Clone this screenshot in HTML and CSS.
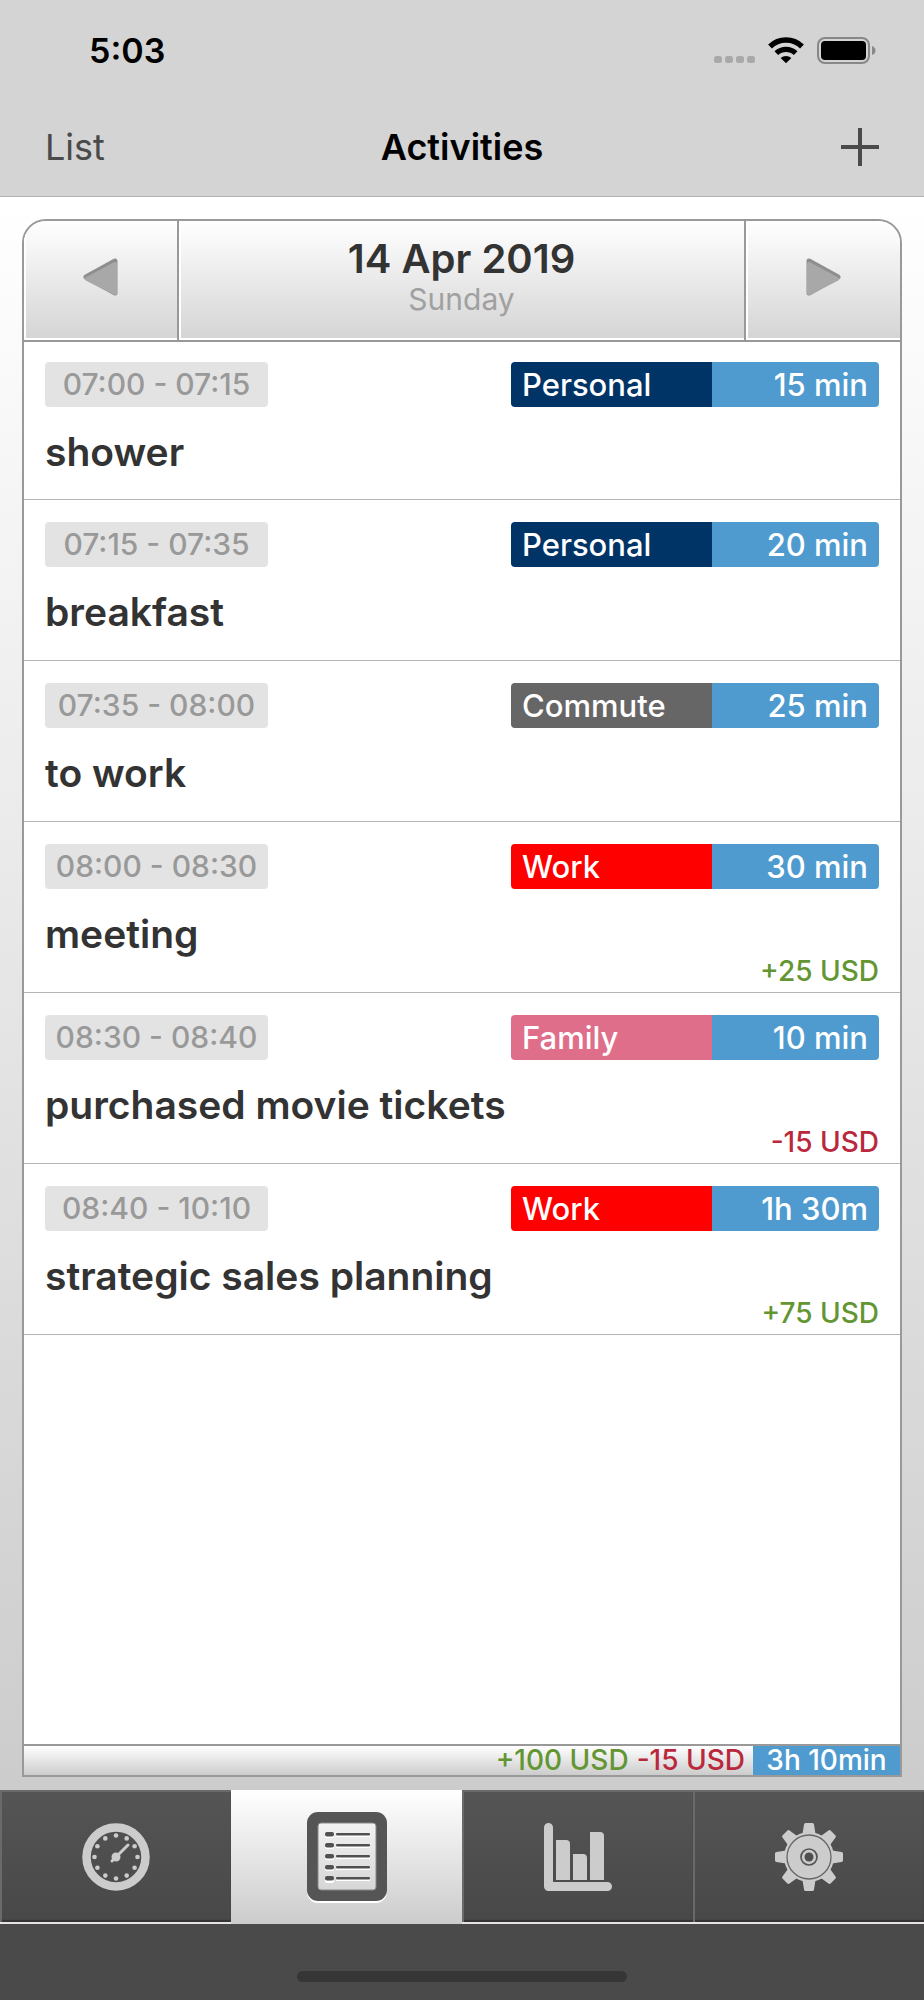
FILE: index.html
```html
<!DOCTYPE html>
<html lang="en">
<head>
    <meta charset="UTF-8">
    <meta name="viewport" content="width=device-width, initial-scale=1.0">
    <title>Activities</title>
    <link rel="stylesheet" href="styles.css">
</head>
<body>
    <header>
        <div class="status">
            <span class="clock">5:03</span>
            <div class="status-icons">
                <svg width="41" height="26" fill="#a9a9a9">
                    <rect x="0" y="19" width="8" height="7" rx="2.5"/>
                    <rect x="11" y="19" width="8" height="7" rx="2.5"/>
                    <rect x="22" y="19" width="8" height="7" rx="2.5"/>
                    <rect x="33" y="19" width="8" height="7" rx="2.5"/>
                </svg>
                <svg width="36" height="26" viewBox="0 0 36 26">
                    <path d="M2 9.5a23 23 0 0 1 32 0" fill="none" stroke="#000" stroke-width="5.4"/>
                    <path d="M8.3 16.2a14 14 0 0 1 19.4 0" fill="none" stroke="#000" stroke-width="5.2"/>
                    <path d="M12.6 21a8 8 0 0 1 10.8 0L18 26.2z"/>
                </svg>
                <svg width="59" height="27" viewBox="0 0 59 27">
                    <rect x="1" y="1" width="51" height="25" rx="7" fill="none" stroke="#888" stroke-width="2"/>
                    <rect x="4" y="4" width="45" height="19" rx="4"/>
                    <path d="M55 9q3.500 1.500 3.500 4.500t-3.500 4.500z" fill="#888"/>
                </svg>
            </div>
        </div>
        <div class="navbar">
            <button class="nav-btn">List</button>
            <h1>Activities</h1>
            <button class="nav-btn add" aria-label="Add">
                <svg width="38" height="38"><path d="M19 0v38M0 19h38" stroke="#4a4a4a" stroke-width="4"/></svg>
            </button>
        </div>
    </header>

    <main>
        <div class="panel">
            <div class="day-nav">
                <button class="day-btn" aria-label="Previous day">
                    <svg width="36" height="40" viewBox="0 0 36 40">
                        <path d="M3 20L32 4v32z" fill="#8e8e8e" stroke="#8e8e8e" stroke-width="5" stroke-linejoin="round"/>
                        <path d="M4 22L32 7v29z" fill="#a8a8a8" stroke="#a8a8a8" stroke-width="4" stroke-linejoin="round"/>
                    </svg>
                </button>
                <button class="day-btn">
                    <span class="date">14 Apr 2019</span>
                    <span class="weekday">Sunday</span>
                </button>
                <button class="day-btn" aria-label="Next day">
                    <svg width="36" height="40" viewBox="0 0 36 40">
                        <path d="M33 20L4 4v32z" fill="#8e8e8e" stroke="#8e8e8e" stroke-width="5" stroke-linejoin="round"/>
                        <path d="M32 22L4 7v29z" fill="#a8a8a8" stroke="#a8a8a8" stroke-width="4" stroke-linejoin="round"/>
                    </svg>
                </button>
            </div>

            <ul class="list">
                <li class="item">
                    <div class="item-top">
                        <span class="time">07:00 - 07:15</span>
                        <div class="tag"><span class="cat personal">Personal</span><span class="duration">15 min</span></div>
                    </div>
                    <div class="item-bottom"><h2>shower</h2></div>
                </li>
                <li class="item">
                    <div class="item-top">
                        <span class="time">07:15 - 07:35</span>
                        <div class="tag"><span class="cat personal">Personal</span><span class="duration">20 min</span></div>
                    </div>
                    <div class="item-bottom"><h2>breakfast</h2></div>
                </li>
                <li class="item">
                    <div class="item-top">
                        <span class="time">07:35 - 08:00</span>
                        <div class="tag"><span class="cat commute">Commute</span><span class="duration">25 min</span></div>
                    </div>
                    <div class="item-bottom"><h2>to work</h2></div>
                </li>
                <li class="item paid">
                    <div class="item-top">
                        <span class="time">08:00 - 08:30</span>
                        <div class="tag"><span class="cat work">Work</span><span class="duration">30 min</span></div>
                    </div>
                    <div class="item-bottom"><h2>meeting</h2><span class="amount plus">+25 USD</span></div>
                </li>
                <li class="item paid">
                    <div class="item-top">
                        <span class="time">08:30 - 08:40</span>
                        <div class="tag"><span class="cat family">Family</span><span class="duration">10 min</span></div>
                    </div>
                    <div class="item-bottom"><h2>purchased movie tickets</h2><span class="amount minus">-15 USD</span></div>
                </li>
                <li class="item paid">
                    <div class="item-top">
                        <span class="time">08:40 - 10:10</span>
                        <div class="tag"><span class="cat work">Work</span><span class="duration">1h 30m</span></div>
                    </div>
                    <div class="item-bottom"><h2>strategic sales planning</h2><span class="amount plus">+75 USD</span></div>
                </li>
            </ul>

            <div class="totals">
                <span class="amount plus">+100 USD</span>
                <span class="amount minus">-15 USD</span>
                <span class="total-time">3h 10min</span>
            </div>
        </div>
    </main>

    <nav class="tabs">
        <button class="tab" aria-label="Timer">
            <svg width="68" height="68" viewBox="0 0 68 68" fill="#ccc">
                <circle cx="34" cy="34" r="29.500" fill="none" stroke="#ccc" stroke-width="8.500"/>
                <circle cx="34" cy="12.500" r="2.300"/>
                <circle cx="44.700" cy="15.400" r="2.300"/>
                <circle cx="52.600" cy="23.300" r="2.300"/>
                <circle cx="55.500" cy="34" r="2.300"/>
                <circle cx="52.600" cy="44.700" r="2.300"/>
                <circle cx="44.700" cy="52.600" r="2.300"/>
                <circle cx="34" cy="55.500" r="2.300"/>
                <circle cx="23.300" cy="52.600" r="2.300"/>
                <circle cx="15.400" cy="44.700" r="2.300"/>
                <circle cx="12.500" cy="34" r="2.300"/>
                <circle cx="15.400" cy="23.300" r="2.300"/>
                <circle cx="23.300" cy="15.400" r="2.300"/>
                <circle cx="34" cy="34" r="4.500"/>
                <path d="M30 38L46 22" stroke="#ccc" stroke-width="3" stroke-linecap="round"/>
            </svg>
        </button>
        <button class="tab active" aria-label="Activities">
            <svg width="82" height="92" viewBox="0 0 82 92">
                <defs>
                    <linearGradient id="paper" x1="0" y1="0" x2="0" y2="1">
                        <stop offset="0" stop-color="#f2f2f2"/>
                        <stop offset="1" stop-color="#d6d6d6"/>
                    </linearGradient>
                </defs>
                <rect x="1" y="3" width="80" height="89" rx="11" fill="#fff"/>
                <rect x="1" y="1" width="80" height="89" rx="11" fill="#555"/>
                <rect x="12" y="12" width="58" height="67" rx="3" fill="url(#paper)" stroke="#888"/>
                <g fill="#fff">
                    <rect x="19" y="23" width="9" height="4" rx="2"/><rect x="30" y="23" width="34" height="3"/>
                    <rect x="19" y="34" width="9" height="4" rx="2"/><rect x="30" y="34" width="34" height="3"/>
                    <rect x="19" y="45" width="9" height="4" rx="2"/><rect x="30" y="45" width="34" height="3"/>
                    <rect x="19" y="56" width="9" height="4" rx="2"/><rect x="30" y="56" width="34" height="3"/>
                    <rect x="19" y="67" width="9" height="5" rx="2"/><rect x="30" y="67" width="34" height="3"/>
                </g>
                <g fill="#505050">
                    <rect x="19" y="21" width="9" height="4.500" rx="2"/><rect x="30" y="22" width="34" height="2.500" rx="1"/>
                    <rect x="19" y="32" width="9" height="4.500" rx="2"/><rect x="30" y="33" width="34" height="2.500" rx="1"/>
                    <rect x="19" y="43" width="9" height="4.500" rx="2"/><rect x="30" y="44" width="34" height="2.500" rx="1"/>
                    <rect x="19" y="54" width="9" height="4.500" rx="2"/><rect x="30" y="55" width="34" height="2.500" rx="1"/>
                    <rect x="19" y="65" width="9" height="4.500" rx="2"/><rect x="30" y="66" width="34" height="2.500" rx="1"/>
                </g>
            </svg>
        </button>
        <button class="tab" aria-label="Reports">
            <svg width="68" height="68" viewBox="0 0 68 68" fill="#ccc">
                <path d="M4.500 4.500V63.500H63.500" fill="none" stroke="#ccc" stroke-width="9" stroke-linecap="round" stroke-linejoin="round"/>
                <path d="M12 17h10q4 0 4 4v36H12z"/>
                <path d="M29 31h10q4 0 4 4v22H29z"/>
                <path d="M46 9h10q4 0 4 4v44H46z"/>
            </svg>
        </button>
        <button class="tab" aria-label="Settings">
            <svg width="68" height="68" viewBox="0 0 68 68" fill="#ccc">
                <defs><path id="tooth" d="M27 14L29 1.500Q29.200 0 30.500 0h7Q38.800 0 39 1.500L41 14z"/></defs>
                <use href="#tooth"/>
                <use href="#tooth" transform="rotate(45 34 34)"/>
                <use href="#tooth" transform="rotate(90 34 34)"/>
                <use href="#tooth" transform="rotate(135 34 34)"/>
                <use href="#tooth" transform="rotate(180 34 34)"/>
                <use href="#tooth" transform="rotate(225 34 34)"/>
                <use href="#tooth" transform="rotate(270 34 34)"/>
                <use href="#tooth" transform="rotate(315 34 34)"/>
                <circle cx="34" cy="34" r="25"/>
                <circle cx="34" cy="34" r="22" fill="none" stroke="#666" stroke-width="1.300"/>
                <circle cx="34" cy="34" r="8" fill="none" stroke="#555" stroke-width="1.700"/>
                <circle cx="34" cy="34" r="4.500" fill="#4f4f4f"/>
            </svg>
        </button>
    </nav>
    <div class="home"><div class="home-bar"></div></div>
</body>
</html>
```
FILE: styles.css
```css
* {
    box-sizing: border-box;
}
body {
    margin: 0;
    min-height: 100vh;
    display: flex;
    flex-direction: column;
    font-family: Inter, "Liberation Sans", sans-serif;
    color: #333;
    background-color: #4a4a4a;
}
button {
    margin: 0;
    padding: 0;
    border: none;
    background: none;
    font-family: inherit;
    color: inherit;
    cursor: pointer;
}
svg {
    display: block;
}
h1, h2, ul {
    margin: 0;
    padding: 0;
}

/* top bars */
header {
    background-color: #d4d4d4;
    border-bottom: 1px solid #b2b2b2;
}
.status {
    height: 101px;
    padding: 0 48px 0 89px;
    display: flex;
    align-items: center;
    justify-content: space-between;
    color: #000;
}
.clock {
    font-size: 34px;
    font-weight: 600;
}
.status-icons {
    display: flex;
    gap: 13px;
}
.navbar {
    height: 95px;
    padding: 0 45px 3px;
    display: grid;
    grid-template-columns: 1fr auto 1fr;
    align-items: center;
}
.navbar h1 {
    font-size: 36px;
    font-weight: 600;
    color: #000;
}
.nav-btn {
    justify-self: start;
    font-size: 36px;
    font-weight: 400;
    color: #4a4a4a;
}
.add {
    justify-self: end;
}

/* day panel */
main {
    flex: 1;
    display: flex;
    padding: 22px 22px 13px;
    background: linear-gradient(#fff, #ccc);
}
.panel {
    flex: 1;
    display: flex;
    flex-direction: column;
    border: 2px solid #999;
    border-radius: 24px 24px 0 0;
    background-color: #fff;
    overflow: hidden;
}
.day-nav {
    height: 121px;
    display: grid;
    grid-template-columns: 153px 1fr 156px;
    border-bottom: 2px solid #999;
}
.day-btn {
    display: flex;
    flex-direction: column;
    align-items: center;
    justify-content: center;
    padding-bottom: 7px;
    background: linear-gradient(#fff, #d4d4d4);
    box-shadow: inset 2px -2px 0 #fff;
}
.day-btn + .day-btn {
    border-left: 2px solid #999;
}
.date {
    font-size: 40px;
    line-height: 44px;
    font-weight: 600;
}
.weekday {
    font-size: 30px;
    line-height: 36px;
    font-weight: 400;
    color: #a0a0a0;
}

.list {
    flex: 1;
    list-style: none;
}
.item {
    min-height: 161px;
    padding: 22px 21px 5px;
    display: flex;
    flex-direction: column;
    border-bottom: 1px solid #b4b4b4;
}
.item:first-child {
    min-height: 158px;
    padding-top: 20px;
}
.paid {
    min-height: 171px;
}
.item-top {
    display: flex;
    justify-content: space-between;
}
.time {
    width: 223px;
    border-radius: 4px;
    background-color: #e3e3e3;
    color: #999;
    font-size: 30px;
    line-height: 45px;
    font-weight: 500;
    text-align: center;
}
.tag {
    width: 368px;
    display: flex;
    border-radius: 4px;
    overflow: hidden;
    color: #fff;
    font-size: 31px;
    line-height: 45px;
    font-weight: 500;
}
.cat {
    width: 201px;
    padding-left: 11px;
}
.duration {
    flex: 1;
    padding-right: 11px;
    background-color: #4f9bcf;
    text-align: right;
}
.personal {
    background-color: #003366;
}
.commute {
    background-color: #666;
}
.work {
    background-color: #f00;
}
.family {
    background-color: #df6e8a;
}
.item-bottom {
    flex: 1;
    display: flex;
    justify-content: space-between;
    padding-top: 21px;
}
.item-bottom h2 {
    font-size: 39px;
    line-height: 48px;
    font-weight: 600;
}
.item-bottom .amount {
    align-self: flex-end;
}
.amount {
    font-size: 28px;
    line-height: 32px;
    font-weight: 500;
}
.plus {
    color: #639632;
}
.minus {
    color: #b9283c;
}

.totals {
    height: 31px;
    display: flex;
    justify-content: flex-end;
    align-items: stretch;
    gap: 8px;
    border-top: 2px solid #999;
    background: linear-gradient(#fff, #ccc);
}
.totals .amount, .total-time {
    line-height: 29px;
}
.total-time {
    width: 147px;
    background-color: #4f9bcf;
    color: #fff;
    font-size: 28px;
    font-weight: 500;
    text-align: center;
}

/* tab bar */
.tabs {
    height: 134px;
    display: grid;
    grid-template-columns: repeat(4, 1fr);
}
.tab {
    display: flex;
    align-items: center;
    justify-content: center;
    padding-top: 2px;
    background: linear-gradient(#555, #484848);
    border-bottom: 2px solid #e6e2e6;
    box-shadow: inset 2px 2px 0 #6a6a6a, inset 0 -2px 1px #333;
}
.tab.active {
    padding-top: 0;
    background: linear-gradient(#fff, #ccc);
    border-bottom: none;
    box-shadow: none;
}

.home {
    height: 76px;
    padding-top: 47px;
}
.home-bar {
    width: 330px;
    height: 11px;
    margin: 0 auto;
    border-radius: 6px;
    background-color: #363636;
}
```
